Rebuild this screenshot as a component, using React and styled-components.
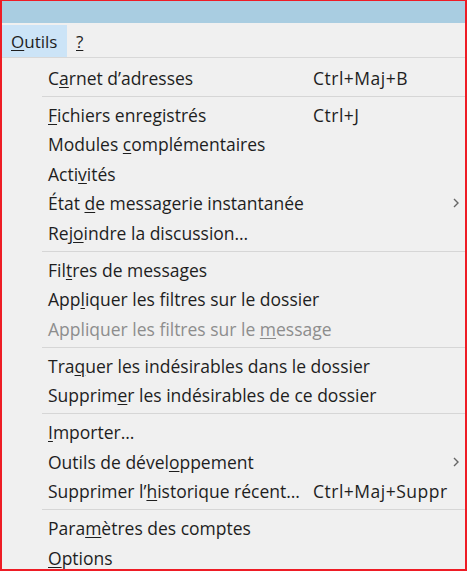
import React from "react";
import styled, { createGlobalStyle } from "styled-components";

const GlobalStyle = createGlobalStyle`
  html, body {
    margin: 0;
    padding: 0;
    background: #f0f0f0;
  }
  * {
    box-sizing: border-box;
  }
`;

const Window = styled.div`
  width: 467px;
  height: 571px;
  border: 2px solid #ee1c25;
  border-top-width: 1px;
  background: #f0f0f0;
  overflow: hidden;
  font-family: "Open Sans", "Noto Sans", sans-serif;
  font-size: 17.5px;
  letter-spacing: 0;
  color: #1e1e1e;
`;

const TitleStrip = styled.div`
  height: 22px;
  background: #a9cde1;
`;

const MenuBar = styled.div`
  display: flex;
  align-items: stretch;
  height: 35px;
  padding: 2px 0 0 0;
  border-bottom: 1px solid #d8d8d8;
`;

const MenuTitle = styled.div`
  display: flex;
  align-items: center;
  padding: 0 7px 0 9px;
  background: ${(p) => (p.$open ? "#cce4f7" : "transparent")};
  width: ${(p) => (p.$open ? "65px" : "auto")};
  font-size: 17px;
`;

const List = styled.div`
  padding-top: 5px;
`;

const Item = styled.div`
  display: grid;
  grid-template-columns: 265px 1fr 14px;
  align-items: center;
  height: 29.5px;
  padding-left: 46px;
  padding-right: 2px;
  color: ${(p) => (p.$disabled ? "#8d8d8d" : "#1e1e1e")};
  white-space: nowrap;
`;

const Shortcut = styled.span`
  letter-spacing: 0.5px;
`;

const Arrow = styled.span`
  display: flex;
  justify-content: center;
`;

const Separator = styled.div`
  height: 7.5px;
  padding-left: 40px;
  display: flex;
  align-items: center;

  &::after {
    content: "";
    flex: 1;
    height: 1px;
    background: #d6d6d6;
  }
`;

const Key = styled.u`
  text-decoration-thickness: 1px;
  text-underline-offset: 2px;
`;

const Chevron = () => (
  <svg width="8" height="12" viewBox="0 0 8 12" fill="none">
    <path d="M2 2 L6 6 L2 10" stroke="#666" strokeWidth="1.4" />
  </svg>
);

const groups = [
  [
    { pre: "C", key: "a", post: "rnet d’adresses", shortcut: "Ctrl+Maj+B" },
  ],
  [
    { pre: "", key: "F", post: "ichiers enregistrés", shortcut: "Ctrl+J" },
    { pre: "Modules ", key: "c", post: "omplémentaires" },
    { pre: "Acti", key: "v", post: "ités" },
    { pre: "État ", key: "d", post: "e messagerie instantanée", submenu: true },
    { pre: "Rej", key: "o", post: "indre la discussion…" },
  ],
  [
    { pre: "Fil", key: "t", post: "res de messages" },
    { pre: "App", key: "l", post: "iquer les filtres sur le dossier" },
    {
      pre: "Appliquer les filtres sur le ",
      key: "m",
      post: "essage",
      disabled: true,
    },
  ],
  [
    { pre: "Tra", key: "q", post: "uer les indésirables dans le dossier" },
    { pre: "Supprim", key: "e", post: "r les indésirables de ce dossier" },
  ],
  [
    { pre: "", key: "I", post: "mporter…" },
    { pre: "Outils de dével", key: "o", post: "ppement", submenu: true },
    {
      pre: "Supprimer l’",
      key: "h",
      post: "istorique récent…",
      shortcut: "Ctrl+Maj+Suppr",
    },
  ],
  [
    { pre: "Para", key: "m", post: "ètres des comptes" },
    { pre: "", key: "O", post: "ptions" },
  ],
];

const App = () => {
  return (
    <>
      <GlobalStyle />
      <Window>
        <TitleStrip />
        <MenuBar>
          <MenuTitle $open>
            <Key>O</Key>utils
          </MenuTitle>
          <MenuTitle>
            <Key>?</Key>
          </MenuTitle>
        </MenuBar>
        <List>
          {groups.map((group, gi) => (
            <React.Fragment key={gi}>
              {gi > 0 && <Separator />}
              {group.map((it, i) => (
                <Item key={i} $disabled={it.disabled}>
                  <span>
                    {it.pre}
                    <Key>{it.key}</Key>
                    {it.post}
                  </span>
                  <Shortcut>{it.shortcut}</Shortcut>
                  <Arrow>{it.submenu && <Chevron />}</Arrow>
                </Item>
              ))}
            </React.Fragment>
          ))}
        </List>
      </Window>
    </>
  );
};

export default App;
